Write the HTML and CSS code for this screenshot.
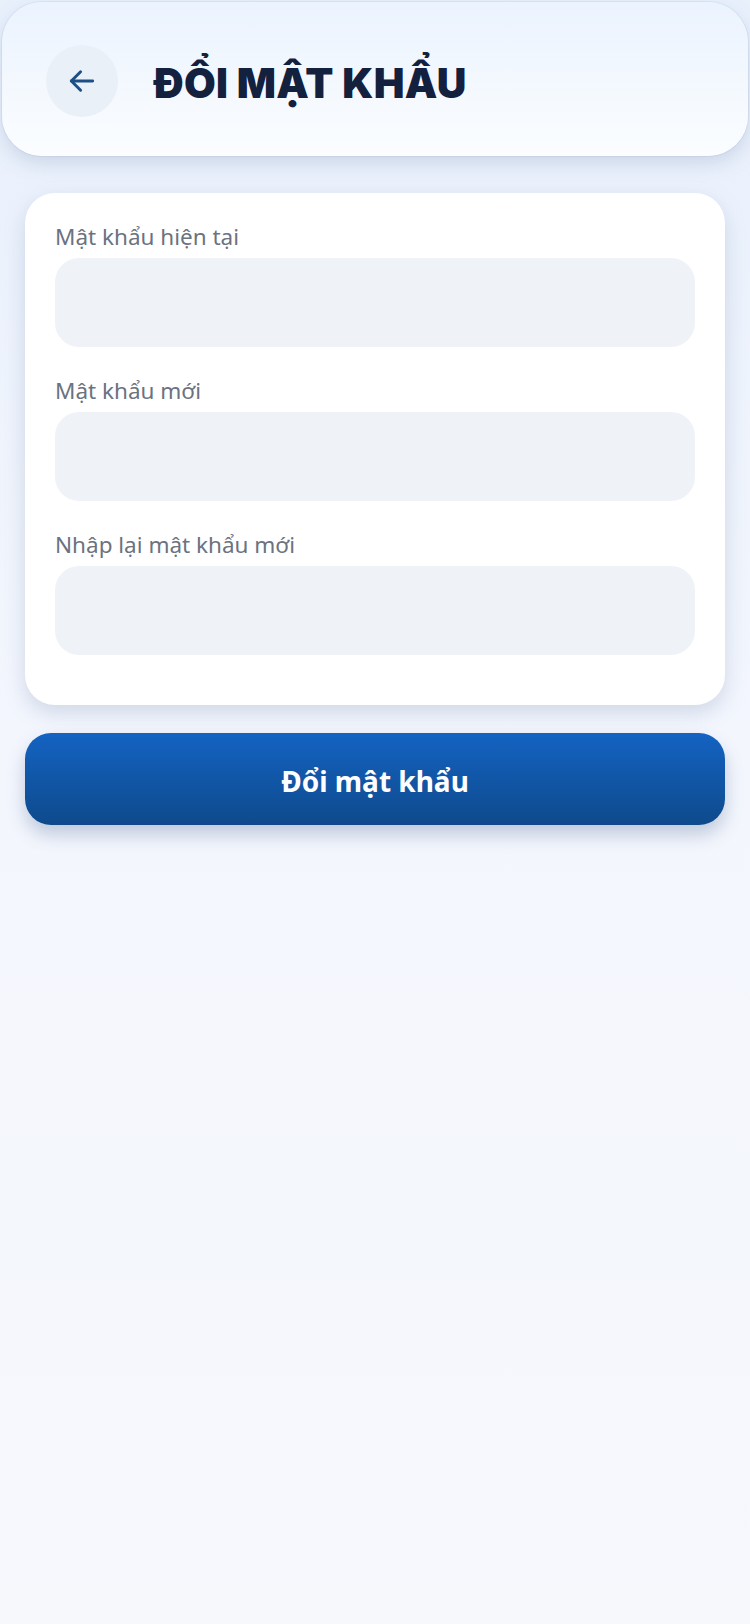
FILE: index.html
```html
<!DOCTYPE html>
<html lang="vi">
<head>
<meta charset="utf-8">
<title>Đổi mật khẩu</title>
<link rel="stylesheet" href="styles.css">
</head>
<body>
<div class="page">
  <header class="header">
    <button class="back" aria-label="Quay lại">
      <svg width="34" height="34" viewBox="0 0 24 24" fill="none" stroke="#1b4f86" stroke-width="2.1" stroke-linecap="round" stroke-linejoin="round"><path d="M19.5 12H4.5"/><path d="M11 5.5L4.5 12l6.5 6.5"/></svg>
    </button>
    <h1 class="title">ĐỔI MẬT KHẨU</h1>
  </header>
  <main class="content">
    <section class="card">
      <div class="field">
        <label class="label">Mật khẩu hiện tại</label>
        <div class="input"></div>
      </div>
      <div class="field">
        <label class="label">Mật khẩu mới</label>
        <div class="input"></div>
      </div>
      <div class="field">
        <label class="label">Nhập lại mật khẩu mới</label>
        <div class="input"></div>
      </div>
    </section>
    <button class="submit">Đổi mật khẩu</button>
  </main>
</div>
</body>
</html>
```
FILE: styles.css
```css
html, body {
  margin: 0;
  padding: 0;
}
body {
  min-height: 1624px;
  background: linear-gradient(180deg, #e8f0fc 0%, #f3f6fd 45%, #f6f8fc 100%);
  font-family: "Noto Sans", "Open Sans", sans-serif;
}
.page {
  padding: 2px 2px 0;
}
.header {
  height: 154px;
  box-sizing: border-box;
  border-radius: 40px;
  background: linear-gradient(180deg, #ebf3fe 0%, #fbfdff 100%);
  box-shadow: 0 8px 18px rgba(120, 140, 175, 0.25), 0 0 0 1px rgba(210, 222, 240, 0.6);
  display: flex;
  align-items: center;
  padding: 3px 0 0 44px;
  gap: 36px;
}
.back {
  width: 72px;
  height: 72px;
  border-radius: 50%;
  border: none;
  background: #eaf0f8;
  display: flex;
  align-items: center;
  justify-content: center;
  padding: 0;
}
.title {
  margin: 4px 0 0;
  font-family: "Inter", "Noto Sans", sans-serif;
  font-weight: 900;
  font-size: 41px;
  letter-spacing: 0.3px;
  color: #13213f;
}
.content {
  padding: 37px 23px 0 23px;
}
.card {
  background: #ffffff;
  border-radius: 30px;
  padding: 29px 30px 50px;
  box-shadow: 0 8px 20px rgba(120, 140, 175, 0.28);
  display: flex;
  flex-direction: column;
  gap: 29px;
}
.field {
  display: flex;
  flex-direction: column;
  gap: 6px;
}
.label {
  font-size: 22.5px;
  line-height: 30px;
  color: #6b7280;
}
.input {
  height: 89px;
  border-radius: 24px;
  background: #eff3f8;
}
.submit {
  margin-top: 28px;
  width: 100%;
  height: 92px;
  border: none;
  border-radius: 26px;
  background: linear-gradient(180deg, #1463c2 0%, #0e4a8c 100%);
  box-shadow: 0 10px 18px rgba(60, 90, 140, 0.28);
  color: #ffffff;
  font-family: "Noto Sans", "Open Sans", sans-serif;
  font-weight: 700;
  font-size: 28px;
  padding: 4px 0 0;
}
```
